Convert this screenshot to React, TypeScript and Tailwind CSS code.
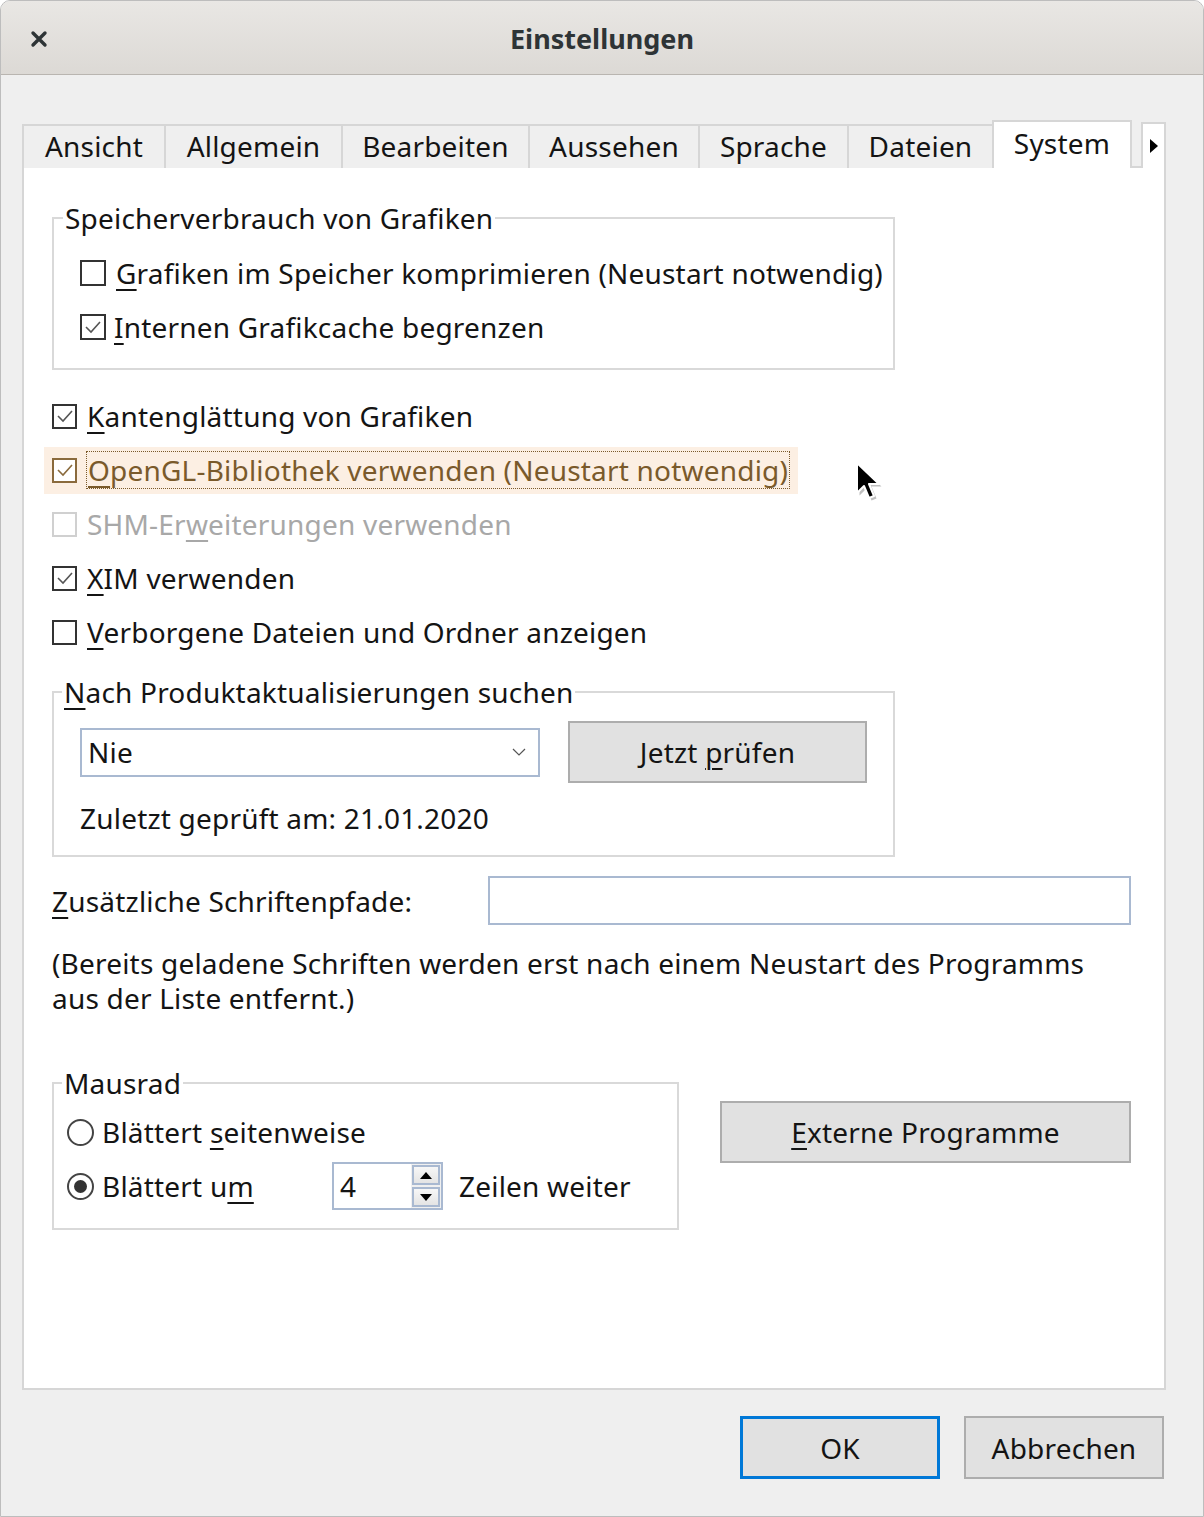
// Dialog "Einstellungen" — System-Reiter, nachgebaut als statische Ansicht.

import React from 'react'

// ─── Kleine Bausteine ────────────────────────────────────────────────────────

function CheckBox({ checked, tone = 'normal', size = 'sm' }: { checked?: boolean; tone?: 'normal' | 'hover' | 'disabled'; size?: 'sm' | 'lg' }) {
  const border =
    tone === 'hover' ? 'border-[#8a6a3c]' : tone === 'disabled' ? 'border-[#d0d0d0]' : 'border-[#333333]'
  const dims = size === 'lg' ? 'w-[26px] h-[26px]' : 'w-[25px] h-[25px]'
  return (
    <span className={`${dims} shrink-0 border-2 ${border} bg-white flex items-center justify-center`}>
      {checked && (
        <svg width="18" height="14" viewBox="0 0 18 14" fill="none">
          <polyline
            points="2,7 7,12 16,2"
            stroke={tone === 'hover' ? '#8a6a3c' : '#555555'}
            strokeWidth="1.6"
          />
        </svg>
      )}
    </span>
  )
}

function Radio({ checked }: { checked?: boolean }) {
  return (
    <span className="w-[27px] h-[27px] shrink-0 rounded-full border-2 border-[#444444] bg-white flex items-center justify-center">
      {checked && <span className="w-[13px] h-[13px] rounded-full bg-[#333333]" />}
    </span>
  )
}

// Mnemonic-Unterstreichung
function U({ children }: { children: React.ReactNode }) {
  return <span className="underline decoration-2 underline-offset-[5px]">{children}</span>
}

// legendPos gleicht das padding-left des fieldsets aus (Legende sitzt sonst eingerückt)
function GroupBox({ title, className, legendPos, children }: { title: React.ReactNode; className: string; legendPos: string; children: React.ReactNode }) {
  return (
    <fieldset className={`border-2 border-[#d9d9d9] ${className}`}>
      <legend className={`${legendPos} px-[2px] leading-[36px]`}>{title}</legend>
      {children}
    </fieldset>
  )
}

const tabs = [
  { label: 'Ansicht', w: 'w-[142px]' },
  { label: 'Allgemein', w: 'w-[177px]' },
  { label: 'Bearbeiten', w: 'w-[187px]' },
  { label: 'Aussehen', w: 'w-[170px]' },
  { label: 'Sprache', w: 'w-[149px]' },
  { label: 'Dateien', w: 'w-[145px]' },
]

// ─── Dialog ──────────────────────────────────────────────────────────────────

export default function App() {
  return (
    <div className="relative w-[1204px] h-[1517px] overflow-hidden rounded-t-[10px] border border-[#bdbdbd] bg-[#efefef] font-['Noto_Sans','Open_Sans',sans-serif] text-[28px] tracking-[0.2px] text-[#141414] flex flex-col">
      {/* Titelleiste */}
      <div className="h-[74px] shrink-0 relative flex items-center justify-center border-b border-[#b9b5b0] bg-gradient-to-b from-[#e9e7e4] to-[#dcd9d5]">
        <svg className="absolute left-[29px] top-[29px]" width="18" height="18" viewBox="0 0 18 18">
          <path d="M3 3 L15 15 M15 3 L3 15" stroke="#2e3436" strokeWidth="3.4" strokeLinecap="round" />
        </svg>
        <span className="font-bold text-[#2e3436] text-[27px] tracking-normal mt-[4px]">Einstellungen</span>
      </div>

      <div className="flex-1 pl-[21px] pr-[37px] pt-[45px]">
        {/* Reiter */}
        <div className="relative z-10 -mb-[2px] flex items-end h-[48px]">
          {tabs.map((t) => (
            <div
              key={t.label}
              className={`${t.w} h-[44px] border-t-2 border-l-2 border-[#d6d6d6] bg-[#efefef] flex items-center justify-center pb-[3px]`}
            >
              {t.label}
            </div>
          ))}
          <div className="w-[140px] h-[48px] border-2 border-b-0 border-[#d6d6d6] bg-white flex items-center justify-center pb-[5px]">
            System
          </div>
          <div className="ml-auto w-[25px] h-[46px] border-2 border-b-0 border-[#d6d6d6] bg-white flex items-center justify-center">
            <svg width="8" height="14" viewBox="0 0 8 14">
              <path d="M0 0 L8 7 L0 14 Z" fill="#000" />
            </svg>
          </div>
        </div>

        {/* Inhalt */}
        <div className="h-[1224px] border-2 border-[#d6d6d6] bg-white pl-[28px]">
          <GroupBox
            title="Speicherverbrauch von Grafiken"
            legendPos="-ml-[17px]"
            className="mt-[32px] w-[843px] pl-[26px] pt-[10px] pb-[14px]"
          >
            <div className="h-[54px] flex items-center gap-[10px]">
              <CheckBox size="lg" />
              <span><U>G</U>rafiken im Speicher komprimieren (Neustart notwendig)</span>
            </div>
            <div className="h-[54px] flex items-center gap-[8px]">
              <CheckBox size="lg" checked />
              <span><U>I</U>nternen Grafikcache begrenzen</span>
            </div>
          </GroupBox>

          <div className="mt-[19px]">
            <div className="h-[54px] flex items-center gap-[10px]">
              <CheckBox checked />
              <span><U>K</U>antenglättung von Grafiken</span>
            </div>
            <div className="h-[54px] flex items-center">
              <div className="-ml-[8px] h-[47px] pl-[8px] pr-[8px] bg-[#fcefe3] flex items-center gap-[9px] text-[#7a5a2b]">
                <CheckBox checked tone="hover" />
                <span className="h-[38px] flex items-center border border-dotted border-[#7a5a2b] px-[1px]">
                  <span><U>O</U>penGL-Bibliothek verwenden (Neustart notwendig)</span>
                </span>
              </div>
            </div>
            <div className="h-[54px] flex items-center gap-[10px] text-[#a8a8a8]">
              <CheckBox tone="disabled" />
              <span>SHM-Er<U>w</U>eiterungen verwenden</span>
            </div>
            <div className="h-[54px] flex items-center gap-[10px]">
              <CheckBox checked />
              <span><U>X</U>IM verwenden</span>
            </div>
            <div className="h-[54px] flex items-center gap-[10px]">
              <CheckBox />
              <span><U>V</U>erborgene Dateien und Ordner anzeigen</span>
            </div>
          </div>

          <GroupBox
            title={<><U>N</U>ach Produktaktualisierungen suchen</>}
            legendPos="-ml-[18px]"
            className="mt-[15px] w-[843px] pl-[26px] pt-[11px] pb-[19px]"
          >
            <div className="h-[62px] flex items-center">
              <div className="w-[460px] h-[49px] border-2 border-[#a9b9d1] bg-white flex items-center justify-between pl-[6px] pr-[12px]">
                <span>Nie</span>
                <svg width="14" height="8" viewBox="0 0 14 8" fill="none">
                  <polyline points="1,1 7,7 13,1" stroke="#555" strokeWidth="1.2" />
                </svg>
              </div>
              <div className="ml-[28px] w-[299px] h-[62px] border-2 border-[#adadad] bg-[#e1e1e1] flex items-center justify-center">
                <span>Jetzt <U>p</U>rüfen</span>
              </div>
            </div>
            <div className="mt-[17px] leading-[36px]">Zuletzt geprüft am: 21.01.2020</div>
          </GroupBox>

          <div className="mt-[19px] flex items-center">
            <span className="w-[436px]"><U>Z</U>usätzliche Schriftenpfade:</span>
            <div className="w-[643px] h-[49px] border-2 border-[#a9b9d1] bg-white" />
          </div>

          <p className="mt-[21px] w-[1050px] leading-[35px]">
            (Bereits geladene Schriften werden erst nach einem Neustart des Programms aus der Liste entfernt.)
          </p>

          <div className="mt-[49px] flex items-start">
            <GroupBox title="Mausrad" legendPos="-ml-[5px]" className="w-[627px] pl-[13px] pt-[4px] pb-[15px]">
              <div className="h-[54px] flex items-center gap-[8px]">
                <Radio />
                <span>Blättert <U>s</U>eitenweise</span>
              </div>
              <div className="h-[54px] flex items-center">
                <Radio checked />
                <span className="ml-[8px] w-[230px]">Blättert u<U>m</U></span>
                <div className="w-[111px] h-[48px] border-2 border-[#a9b9d1] bg-white flex">
                  <span className="flex-1 pl-[6px] flex items-center">4</span>
                  <div className="w-[30px] bg-[#f0f0f0] flex flex-col justify-center gap-[2px] px-[1px]">
                    <div className="h-[20px] border-2 border-[#a9b9d1] bg-gradient-to-b from-[#f7f7f7] to-[#e4e4e4] flex items-center justify-center">
                      <svg width="12" height="7" viewBox="0 0 12 7"><path d="M0 7 L6 0 L12 7 Z" fill="#000" /></svg>
                    </div>
                    <div className="h-[20px] border-2 border-[#a9b9d1] bg-gradient-to-b from-[#f7f7f7] to-[#e4e4e4] flex items-center justify-center">
                      <svg width="12" height="7" viewBox="0 0 12 7"><path d="M0 0 L12 0 L6 7 Z" fill="#000" /></svg>
                    </div>
                  </div>
                </div>
                <span className="ml-[16px]">Zeilen weiter</span>
              </div>
            </GroupBox>
            <div className="ml-[41px] mt-[36px] w-[411px] h-[62px] border-2 border-[#adadad] bg-[#e1e1e1] flex items-center justify-center">
              <span><U>E</U>xterne Programme</span>
            </div>
          </div>
        </div>

        {/* Dialogknöpfe */}
        <div className="pt-[26px] pr-[2px] flex justify-end gap-[24px]">
          <div className="w-[200px] h-[63px] border-[3px] border-[#0078d7] bg-[#e1e1e1] flex items-center justify-center">OK</div>
          <div className="w-[200px] h-[63px] border-2 border-[#adadad] bg-[#e1e1e1] flex items-center justify-center">Abbrechen</div>
        </div>
      </div>

      {/* Mauszeiger */}
      <svg className="absolute left-[852px] top-[459px]" width="30" height="44" viewBox="0 0 30 44">
        <path d="M5 4 L5 34 L12 27 L17 39 L22 37 L17 25 L27 25 Z" fill="rgba(0,0,0,0.25)" transform="translate(1.5 1.5)" />
        <path d="M4 3 L4 33 L11 26 L16 38 L21 36 L16 24 L26 24 Z" fill="#000" stroke="#fff" strokeWidth="2" strokeLinejoin="round" />
      </svg>
    </div>
  )
}
